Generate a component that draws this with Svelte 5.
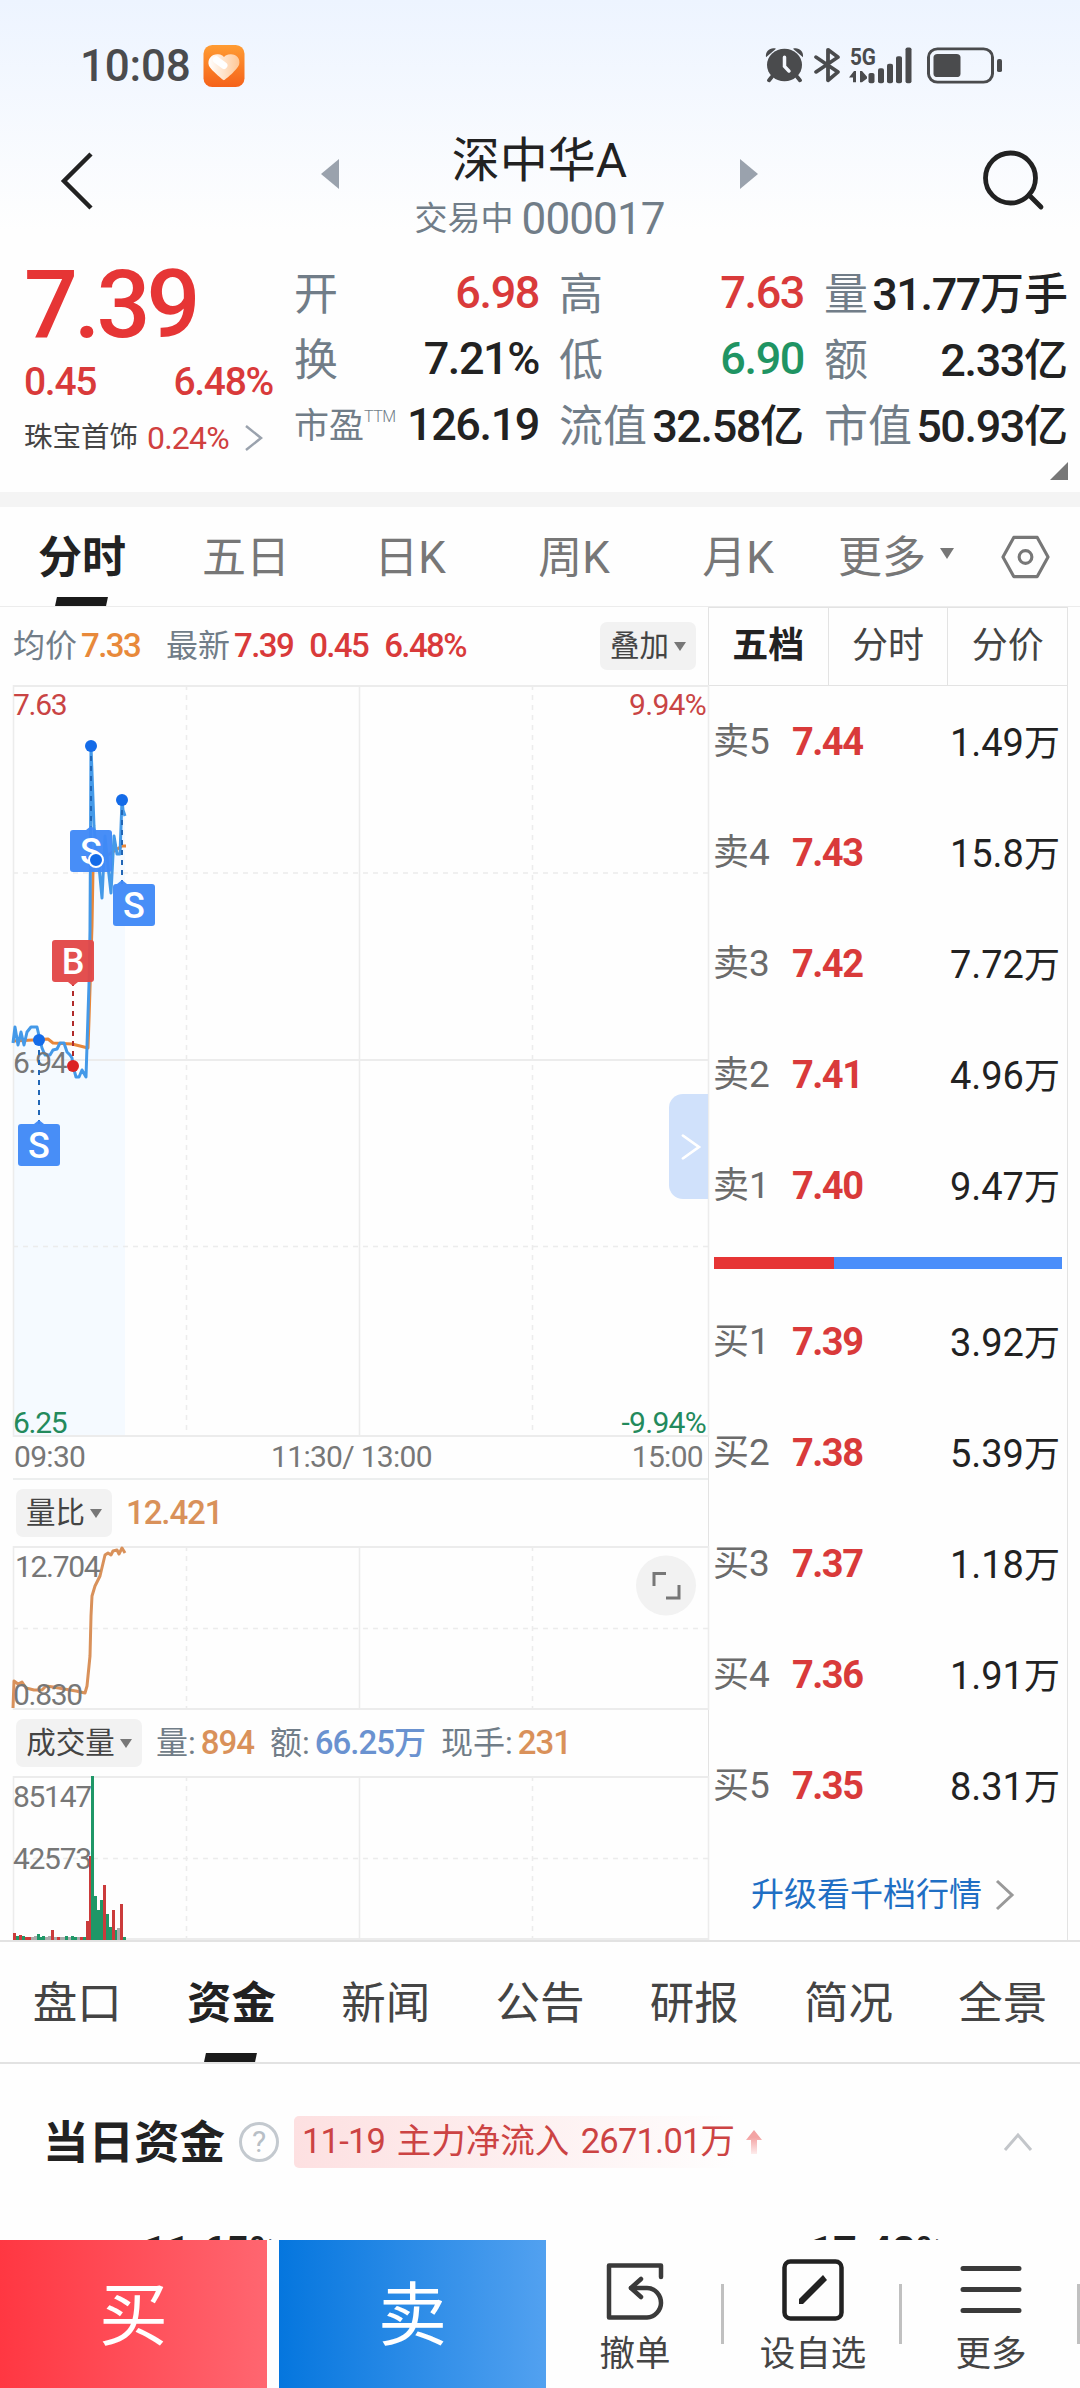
<script lang="ts">
  type Tone = 'up' | 'down' | '';

  interface Stat {
    label: string;
    value: string;
    unit?: string;
    tone?: Tone;
    sup?: string;
  }

  interface Level {
    name: string;
    no: number;
    price: string;
    volume: string;
  }

  interface Marker {
    kind: 'B' | 'S';
    x: number; // dot position
    y: number;
    boxX: number;
    boxY: number;
  }

  const stats: Stat[] = [
    { label: '开', value: '6.98', tone: 'up' },
    { label: '高', value: '7.63', tone: 'up' },
    { label: '量', value: '31.77', unit: '万手' },
    { label: '换', value: '7.21%' },
    { label: '低', value: '6.90', tone: 'down' },
    { label: '额', value: '2.33', unit: '亿' },
    { label: '市盈', value: '126.19', sup: 'TTM' },
    { label: '流值', value: '32.58', unit: '亿' },
    { label: '市值', value: '50.93', unit: '亿' }
  ];

  const periods = ['分时', '五日', '日K', '周K', '月K'];
  const bookTabs = ['五档', '分时', '分价'];
  const infoTabs = ['盘口', '资金', '新闻', '公告', '研报', '简况', '全景'];

  const asks: Level[] = [
    { name: '卖', no: 5, price: '7.44', volume: '1.49' },
    { name: '卖', no: 4, price: '7.43', volume: '15.8' },
    { name: '卖', no: 3, price: '7.42', volume: '7.72' },
    { name: '卖', no: 2, price: '7.41', volume: '4.96' },
    { name: '卖', no: 1, price: '7.40', volume: '9.47' }
  ];
  const bids: Level[] = [
    { name: '买', no: 1, price: '7.39', volume: '3.92' },
    { name: '买', no: 2, price: '7.38', volume: '5.39' },
    { name: '买', no: 3, price: '7.37', volume: '1.18' },
    { name: '买', no: 4, price: '7.36', volume: '1.91' },
    { name: '买', no: 5, price: '7.35', volume: '8.31' }
  ];

  let period = $state(0);
  let bookTab = $state(0);
  let infoTab = $state(1);

  // Price line, chart units
  const price =
    '0,358 2,342 5,360 8,347 11,360 14,347 18,342 24,342 27,355 29,363 32,370 37,370 40,365 44,364 47,358 51,358 54,367 57,370 59,373 60,381 63,392 66,392 69,385 73,392 76,299 77,245 78,61 81,141 84,175 86,181 89,213 92,151 95,181 98,208 101,151 104,169 107,169 109,115 110,125 112,131';
  const average = '0,356 20,355 35,354 40,358 59,359 75,363 76,335 79,241 80,185 83,179 95,170 109,161 113,161';
  const ratio =
    '0,162 1,135 5,138 9,136 13,142 21,144 29,144 33,140 40,141 51,143 63,145 72,147 74,140 77,110 78,70 79,50 82,40 87,30 92,9 95,7 98,9 100,5 104,4 106,8 109,2 112,7';

  const markers: Marker[] = [
    { kind: 'S', x: 78, y: 61, boxX: 57, boxY: 145 },
    { kind: 'S', x: 109, y: 115, boxX: 100, boxY: 199 },
    { kind: 'B', x: 60, y: 381, boxX: 39, boxY: 255 },
    { kind: 'S', x: 26, y: 355, boxX: 5, boxY: 439 }
  ];

  // x, height, colour
  const r = '#cb3b3b';
  const g = '#1f9767';
  const n = '#aaa';
  const bars: [number, number, string][] = [
    [0, 7, r], [3, 4, g], [6, 5, r], [9, 4, g], [12, 3, r], [15, 3, r], [18, 3, n], [21, 4, n],
    [24, 6, g], [27, 3, g], [29, 4, g], [32, 3, n], [35, 4, n], [38, 10, r], [41, 3, n], [44, 3, r],
    [47, 3, n], [50, 3, n], [52, 4, g], [55, 3, n], [58, 4, g], [61, 3, g], [64, 3, n], [67, 3, r],
    [70, 3, g], [73, 19, r], [76, 84, r], [78, 164, g], [81, 44, g], [84, 30, g], [87, 40, g],
    [90, 55, r], [93, 26, g], [96, 13, g], [99, 30, r], [102, 10, g], [104, 12, n], [107, 36, r], [110, 3, g]
  ];
</script>

{#snippet grid(h: number)}
  <g class="grid">
    <path d="M0.5 0V{h}M346.5 0V{h}M695.5 0V{h}" />
    <path class="dash" d="M173.5 0V{h}M519.5 0V{h}" />
    <path class="edge" d="M0 1H696M0 {h - 1}H696" />
  </g>
{/snippet}

{#snippet level(row: Level)}
  <div class="level">
    <span class="who">{row.name}<i>{row.no}</i></span>
    <b>{row.price}</b>
    <span class="vol">{row.volume}<em>万</em></span>
  </div>
{/snippet}

<div class="screen">
  <header class="top">
    <div class="status">
      <span class="clock">10:08</span>
      <svg class="app-icon" width="42" height="42" viewBox="0 0 42 43">
        <defs>
          <linearGradient id="orange" x1="0" y1="0" x2="0" y2="1">
            <stop offset="0" stop-color="#ff9c33" />
            <stop offset="1" stop-color="#f5621a" />
          </linearGradient>
          <linearGradient id="heart" x1="0" y1="0" x2="1" y2="0">
            <stop offset="0" stop-color="#fff" />
            <stop offset="1" stop-color="#ffc795" />
          </linearGradient>
        </defs>
        <rect width="42" height="43" rx="9" fill="url(#orange)" />
        <path
          d="M21 36C20 36 7 25 5.500 21C3.500 14 9 9 15 9.500C18 9.500 20 11 21 12.500C22 11 24 9.500 28 9.500C34 9.500 38 14 36.500 20C35 25 22 36 21 36Z"
          fill="url(#heart)"
        />
        <path d="M13 15L21 21" stroke="#fff" stroke-width="7" stroke-linecap="round" />
      </svg>
      <svg class="sys" width="240" height="39" viewBox="0 0 240 42" preserveAspectRatio="none">
        <g fill="#4a4b4d">
          <circle cx="19.500" cy="20.500" r="17.500" />
          <path d="M1 12C0 5 6 1 11 3zM38 12C39 5 33 1 28 3z" />
          <path d="M7 33L4 37M32 33L35 37" stroke="#4a4b4d" stroke-width="4" stroke-linecap="round" />
          <path d="M19.500 12V22L24 27" fill="none" stroke="#f5f8fe" stroke-width="3.500" stroke-linecap="round" />
          <path
            d="M51 12L73 28L63 37V4L73 12L51 28"
            fill="none"
            stroke="#4a4b4d"
            stroke-width="3.800"
            stroke-linejoin="round"
            stroke-linecap="round"
          />
          <text x="85" y="20" font-size="25" font-weight="700" textLength="26" lengthAdjust="spacingAndGlyphs">5G</text>
          <path d="M84 34L89 27H91V39H88V34zM95 27H97L102 33V35L97 39H95z" />
          <rect x="103.500" y="29" width="6" height="11" rx="2" />
          <rect x="113" y="24" width="6" height="16" rx="2" />
          <rect x="122" y="19" width="6" height="21" rx="2" />
          <rect x="131" y="11" width="6" height="29" rx="2" />
          <rect x="140.500" y="1.500" width="6" height="38.500" rx="2" />
          <rect x="163.500" y="3" width="64" height="36" rx="9" fill="none" stroke="#4a4b4d" stroke-width="3" />
          <rect x="168.500" y="8.500" width="27" height="25" rx="4" />
          <rect x="232" y="14" width="5" height="14" rx="2" />
        </g>
      </svg>
    </div>

    <nav class="nav">
      <svg class="back" width="34" height="60" viewBox="0 0 34 60">
        <path d="M30 3L3 30L30 57" fill="none" stroke="#222" stroke-width="4.500" />
      </svg>
      <div class="switch">
        <svg width="18" height="30" viewBox="0 0 18 30"><path d="M0 15L18 0V30z" fill="#9aa2ad" /></svg>
        <div class="title">
          <h1>深中华A</h1>
          <p>交易中 <span>000017</span></p>
        </div>
        <svg width="18" height="30" viewBox="0 0 18 30"><path d="M18 15L0 0V30z" fill="#9aa2ad" /></svg>
      </div>
      <svg class="search" width="62" height="62" viewBox="0 0 62 62">
        <g fill="none" stroke="#222" stroke-width="4.800">
          <circle cx="27.500" cy="29" r="25" />
          <path d="M46 46L58 58" stroke-linecap="round" />
        </g>
      </svg>
    </nav>

    <section class="quote">
      <div class="last">
        <strong>7.39</strong>
        <div class="change"><span>0.45</span><span>6.48%</span></div>
        <div class="sector">
          珠宝首饰 <span>0.24%</span>
          <svg width="20" height="28" viewBox="0 0 20 28">
            <path d="M2 2L17 14L2 26" fill="none" stroke="#9aa2ad" stroke-width="2.500" />
          </svg>
        </div>
      </div>
      <div class="stats">
        {#each stats as s}
          <div class="stat">
            <span class="label" class:small={s.sup}>{s.label}{#if s.sup}<sup>{s.sup}</sup>{/if}</span>
            <span class="value {s.tone ?? ''}" class:unit={s.unit}>{s.value}{#if s.unit}<em>{s.unit}</em>{/if}</span>
          </div>
        {/each}
      </div>
      <i class="corner"></i>
    </section>
  </header>

  <div class="band"></div>

  <nav class="periods">
    {#each periods as p, i}
      <button class:active={i === period} onclick={() => (period = i)}>{p}</button>
    {/each}
    <button class="more">更多<i class="caret"></i></button>
    <svg class="hex" width="49" height="46" viewBox="0 0 50 46">
      <g fill="none" stroke="#777" stroke-width="3.200" stroke-linejoin="round">
        <path d="M13 3H37L48 23L37 43H13L2 23z" />
        <circle cx="25" cy="23" r="6.500" />
      </g>
    </svg>
  </nav>

  <main class="market">
    <div class="charts">
      <div class="legend first">
        <span class="cap">均价</span><span class="num orange">7.33</span>
        <span class="cap gap">最新</span><span class="num red">7.39</span>
        <span class="num red next">0.45</span><span class="num red next">6.48%</span>
        <button class="pick push">叠加<i class="caret"></i></button>
      </div>

      <div class="plot">
        <svg width="696" height="752" viewBox="0 0 696 752">
          <polygon points="0,752 {price} 112,752" fill="#f5faff" />
          {@render grid(752)}
          <g class="grid">
            <path class="dash" d="M0 188H696M0 561.500H696" />
            <path class="edge" d="M0 375H696" />
          </g>
          <polyline points={average} class="line" stroke="#e8873a" />
          <polyline points={price} class="line" stroke="#4499e8" />
          <g class="axis">
            <text class="up" x="0" y="30">7.63</text>
            <text class="up end" x="693" y="30">9.94%</text>
            <text x="0" y="388">6.94</text>
            <text class="down" x="0" y="748">6.25</text>
            <text class="down end" x="693" y="748">-9.94%</text>
          </g>
          {#each markers as m}
            <g class={m.kind === 'B' ? 'mark buy' : 'mark sell'}>
              <path class="stem" d="M{m.x} {m.y + (m.kind === 'B' ? -10 : 10)}V{m.kind === 'B' ? m.boxY + 44 : m.boxY}" />
              {#if m.kind === 'B'}
                <path class="flag" d="M{m.x - 5} {m.boxY + 42}h10l-5 4z" />
              {:else}
                <path class="flag" d="M{m.x - 5} {m.boxY}h10l-5 -4z" />
              {/if}
              <rect class="flag" x={m.boxX} y={m.boxY} width="42" height="42" rx="3" />
              <text x={m.boxX + 21} y={m.boxY + 34}>{m.kind}</text>
              <circle cx={m.x} cy={m.y} r="6" />
            </g>
          {/each}
          <circle cx="83" cy="175" r="7" fill="#146be8" stroke="#fff" stroke-width="2" />
        </svg>
        <button class="drawer" aria-label="展开">
          <svg width="20" height="26" viewBox="0 0 20 32" preserveAspectRatio="none">
            <path d="M2 2L18 16L2 30" fill="none" stroke="#fff" stroke-width="3" stroke-linecap="round" />
          </svg>
        </button>
      </div>

      <div class="times"><span>09:30</span><span class="noon">11:30/ 13:00</span><span>15:00</span></div>

      <div class="legend ratio">
        <button class="pick">量比<i class="caret"></i></button>
        <span class="num tan lead">12.421</span>
      </div>
      <div class="plot">
        <svg width="696" height="164" viewBox="0 0 696 164">
          {@render grid(164)}
          <path class="dash grid" d="M0 82.500H696" />
          <polyline points={ratio} class="line" stroke="#d9915a" />
          <g class="axis">
            <text x="2" y="31">12.704</text>
            <text x="0" y="159">0.830</text>
          </g>
          <circle cx="653" cy="39.500" r="30" fill="#f2f2f2" />
          <path d="M641 40V27.500H653M666 39V52H653" fill="none" stroke="#777" stroke-width="3" />
        </svg>
      </div>

      <div class="legend volume">
        <button class="pick wide">成交量<i class="caret"></i></button>
        <span class="cap lead">量:</span><span class="num tan">894</span>
        <span class="cap next">额:</span><span class="num blue">66.25<em>万</em></span>
        <span class="cap next">现手:</span><span class="num tan">231</span>
      </div>
      <div class="plot">
        <svg width="696" height="164" viewBox="0 0 696 164">
          {@render grid(164)}
          <path class="dash grid" d="M0 82.500H696" />
          <g class="axis">
            <text x="0" y="31">85147</text>
            <text x="0" y="93">42573</text>
          </g>
          {#each bars as [x, h, color]}
            <rect {x} y={164 - h} width="3" height={h} fill={color} />
          {/each}
        </svg>
      </div>
    </div>

    <aside class="book">
      <div class="book-tabs">
        {#each bookTabs as t, i}
          <button class:active={i === bookTab} onclick={() => (bookTab = i)}>{t}</button>
        {/each}
      </div>
      <div class="levels">
        {#each asks as row}{@render level(row)}{/each}
      </div>
      <div class="balance"><i style="width: 34.5%"></i></div>
      <div class="levels">
        {#each bids as row}{@render level(row)}{/each}
      </div>
      <div class="upgrade">
        升级看千档行情
        <svg width="20" height="32" viewBox="0 0 20 32">
          <path d="M2 2L17 16L2 30" fill="none" stroke="#999" stroke-width="3" />
        </svg>
      </div>
    </aside>
  </main>

  <nav class="info-tabs">
    {#each infoTabs as t, i}
      <button class:active={i === infoTab} onclick={() => (infoTab = i)}>{t}</button>
    {/each}
  </nav>

  <section class="funds">
    <div class="funds-head">
      <h2>当日资金</h2>
      <span class="help">?</span>
      <span class="flow"><i>11-19</i> 主力净流入 <i>2671.01</i>万</span>
      <svg class="arrow" width="18" height="24" viewBox="0 0 18 24">
        <defs>
          <linearGradient id="fade" x1="0" y1="0" x2="0" y2="1">
            <stop offset="0.300" stop-color="#f3a3a3" />
            <stop offset="1" stop-color="#fdecec" />
          </linearGradient>
        </defs>
        <path d="M9 0L17 10H12V24H6V10H1z" fill="url(#fade)" />
      </svg>
      <svg class="fold" width="30" height="20" viewBox="0 0 30 20">
        <path d="M2 18L15 3L28 18" fill="none" stroke="#c3c6ca" stroke-width="3" />
      </svg>
    </div>
    <div class="shares"><span>11.65%</span><span>17.42%</span></div>
  </section>

  <footer class="actions">
    <button class="buy-btn">买</button>
    <button class="sell-btn">卖</button>
    <div class="tools">
      <div class="tool">
        <svg width="62" height="62" viewBox="0 0 62 62">
          <g fill="none" stroke="#3a3a3a" stroke-width="4.500" stroke-linecap="round" stroke-linejoin="round">
            <path d="M57 18V6.500H5V58.500H43C51 58 57 51 57 44C57 36 51 29 43 29H27" />
            <path d="M37 20L27 29L37 38" />
          </g>
        </svg>
        <span>撤单</span>
      </div>
      <div class="tool">
        <svg width="62" height="62" viewBox="0 0 62 62">
          <rect x="2.500" y="2.500" width="57" height="57" rx="6" fill="none" stroke="#222" stroke-width="4.500" />
          <path d="M17 45V40L41 16L45 21L21 45z" fill="#222" />
        </svg>
        <span>设自选</span>
      </div>
      <div class="tool">
        <svg width="62" height="62" viewBox="0 0 62 62">
          <path d="M3 9.500H59M3 30.500H59M3 51.500H59" stroke="#3a3a3a" stroke-width="5" stroke-linecap="round" />
        </svg>
        <span>更多</span>
      </div>
    </div>
  </footer>
</div>

<style>
  :global(body) {
    margin: 0;
    background: #fff;
  }

  .screen {
    display: flex;
    flex-direction: column;
    width: 1080px;
    height: 2388px;
    overflow: hidden;
    background: #fefefe;
    color: #222;
    font-family: Roboto, "Noto Sans CJK SC", sans-serif;
  }

  button {
    padding: 0;
    border: none;
    background: none;
    color: inherit;
    font-family: inherit;
  }

  h1, h2, p {
    margin: 0;
    font-weight: 400;
  }

  i, em {
    font-style: normal;
  }

  svg {
    display: block;
    flex: none;
    overflow: visible;
  }

  .up { color: #d93a3a; fill: #c94444; }
  .down { color: #1f9463; fill: #238a5c; }

  .top {
    height: 492px;
    flex: none;
    background: linear-gradient(#edf4ff, #fefefe 230px);
  }

  .status {
    display: flex;
    align-items: center;
    box-sizing: border-box;
    height: 131px;
    padding: 0 75px 0 80px;
  }

  .clock {
    width: 123px;
    color: #4a4b4d;
    font-size: 44px;
    font-weight: 500;
    letter-spacing: -0.2px;
  }

  .sys {
    margin-left: auto;
  }

  .nav {
    display: flex;
    justify-content: space-between;
    height: 119px;
    padding: 0 35px 0 61px;
  }

  .back {
    margin-top: 20px;
  }

  .search {
    margin-top: 18px;
  }

  .switch {
    display: flex;
    justify-content: space-between;
    width: 438px;
    margin-left: 1px;
  }

  .switch > svg {
    margin-top: 28px;
  }

  .title {
    text-align: center;
    white-space: nowrap;
  }

  .title h1 {
    font-size: 48px;
    line-height: 60px;
  }

  .title p {
    color: #717d88;
    font-size: 33px;
    line-height: 56px;
  }

  .title p span {
    font-size: 44px;
    letter-spacing: -0.9px;
    vertical-align: -4px;
  }

  .quote {
    position: relative;
    display: flex;
    height: 242px;
  }

  .last {
    display: flex;
    flex-direction: column;
    width: 271px;
    padding: 3px 0 0 24px;
  }

  .last strong {
    height: 104px;
    color: #e63535;
    font-size: 95px;
    font-weight: 500;
    letter-spacing: -4px;
    line-height: 104px;
  }

  .change {
    display: flex;
    justify-content: space-between;
    height: 50px;
    padding-right: 22px;
    color: #d93a3a;
    font-size: 39px;
    font-weight: 500;
    letter-spacing: -1.3px;
    line-height: 50px;
  }

  .sector {
    display: flex;
    align-items: center;
    height: 62px;
    color: #444;
    font-size: 28.5px;
    line-height: 40px;
    white-space: nowrap;
  }

  .sector span {
    margin: 0 15px 0 9px;
    color: #d0403f;
    font-size: 32px;
    letter-spacing: -0.8px;
  }

  .stats {
    display: grid;
    grid-template-columns: 245px 245px 244px;
    grid-auto-rows: 66px;
    column-gap: 20px;
    padding-top: 10px;
    margin-left: -1px;
  }

  .stat {
    display: flex;
    align-items: center;
    justify-content: space-between;
    white-space: nowrap;
  }

  .label {
    padding-top: 3px;
    color: #717d88;
    font-size: 44px;
    line-height: 60px;
  }

  .label.small {
    font-size: 35px;
  }

  .label sup {
    font-size: 16px;
    font-weight: 300;
    line-height: 1;
    vertical-align: 16px;
    letter-spacing: -0.5px;
  }

  .value {
    font-size: 45px;
    font-weight: 500;
    letter-spacing: -1.4px;
    line-height: 60px;
  }

  .value.unit {
    padding-top: 4px;
  }

  .value em {
    font-size: 44px;
    letter-spacing: 0;
  }

  .corner {
    position: absolute;
    right: 12px;
    bottom: 12px;
    border-bottom: 18px solid #777;
    border-left: 18px solid transparent;
  }

  .band {
    flex: none;
    height: 15px;
    background: #f4f4f4;
  }

  .periods {
    display: flex;
    align-items: center;
    flex: none;
    box-sizing: border-box;
    height: 100px;
    border-bottom: 1px solid #ececec;
  }

  .periods button {
    position: relative;
    width: 164px;
    height: 99px;
    padding-bottom: 6px;
    color: #777;
    font-size: 44px;
  }

  .periods .more {
    display: flex;
    align-items: center;
    box-sizing: border-box;
    width: 181px;
    padding-left: 18px;
  }

  .active,
  .periods button.active {
    color: #222;
    font-weight: 700;
  }

  .periods .active::after,
  .info-tabs .active::after {
    content: "";
    position: absolute;
    bottom: 0;
    left: calc(50% - 26px);
    width: 51px;
    height: 9px;
    background: #1a1a1a;
    transform: skewX(-12deg);
  }

  .caret {
    border: 6.5px solid transparent;
    border-top: 9px solid #777;
    border-bottom: 0;
  }

  .more .caret {
    margin-left: 14px;
    border-width: 11px 7.5px 0;
  }

  .market {
    display: flex;
    flex: none;
    height: 1333px;
    border-bottom: 2px solid #e2e2e2;
  }

  .charts {
    display: flex;
    flex-direction: column;
    width: 695px;
    padding-left: 13px;
  }

  .legend {
    display: flex;
    align-items: center;
    line-height: 40px;
    white-space: nowrap;
  }

  .legend.first {
    height: 78px;
  }

  .legend.ratio {
    height: 66px;
    border-top: 2px solid #eceeee;
  }

  .legend.volume {
    height: 66px;
  }

  .cap {
    color: #717d88;
    font-size: 32px;
  }

  .num {
    margin-left: 4px;
    font-size: 33px;
    font-weight: 500;
    letter-spacing: -1.6px;
  }

  .volume .num {
    margin-left: 5px;
    letter-spacing: -1px;
  }

  .num em {
    font-size: 32px;
  }

  .gap { margin-left: 26px; }
  .num.next, .next { margin-left: 16px; }
  .num.lead, .lead { margin-left: 14px; }
  .ratio .num { letter-spacing: -1.1px; }
  .push { margin-left: auto; margin-right: 12px; }

  .orange { color: #e8893a; }
  .red { color: #d93a3a; }
  .tan { color: #d9915a; }
  .blue { color: #6a92d0; }

  .pick {
    display: flex;
    align-items: center;
    justify-content: center;
    gap: 5px;
    width: 96px;
    height: 48px;
    border-radius: 7px;
    background: #f2f2f2;
    color: #444;
    font-size: 29.5px;
    line-height: 40px;
  }

  .ratio .pick,
  .volume .pick {
    margin-left: 3px;
  }

  .pick.wide {
    width: 126px;
  }

  .plot {
    position: relative;
  }

  .grid {
    fill: none;
    stroke: #ececec;
    stroke-width: 1.5;
  }

  .edge {
    stroke-width: 2;
  }

  .dash {
    stroke-dasharray: 5 5;
  }

  .line {
    fill: none;
    stroke-width: 3;
    stroke-linejoin: round;
  }

  .axis text {
    font-size: 30px;
    letter-spacing: -1.3px;
  }

  .axis text:not(.up):not(.down) {
    fill: #777;
  }

  .axis .end {
    letter-spacing: -0.7px;
    text-anchor: end;
  }

  .mark text {
    fill: #fff;
    font-size: 36px;
    font-weight: 500;
    text-anchor: middle;
  }

  .stem {
    stroke-width: 2;
    stroke-dasharray: 5 5;
  }

  .flag {
    fill-opacity: 0.96;
  }

  .sell .flag { fill: #4189f7; }
  .sell circle { fill: #146be8; }
  .sell .stem { stroke: #2266b5; }
  .buy .flag { fill: #e24848; }
  .buy circle { fill: #dc2424; }
  .buy .stem { stroke: #b02a2a; }

  .drawer {
    position: absolute;
    top: 409px;
    right: 0;
    display: flex;
    align-items: center;
    justify-content: center;
    width: 39px;
    height: 105px;
    padding-left: 4px;
    border-radius: 14px 0 0 14px;
    background: #d0e1fb;
    box-sizing: border-box;
  }

  .times {
    display: flex;
    justify-content: space-between;
    height: 41px;
    padding: 0 5px 0 1px;
    color: #777;
    font-size: 30px;
    letter-spacing: -0.7px;
    line-height: 39px;
  }

  .noon {
    margin-right: 14px;
  }

  .book {
    display: flex;
    flex-direction: column;
    box-sizing: border-box;
    width: 360px;
    height: 1333px;
    border: 1px solid #e3e3e3;
    border-bottom: none;
  }

  .book-tabs {
    display: flex;
    height: 77px;
    border-bottom: 1px solid #e3e3e3;
  }

  .book-tabs button {
    flex: 1;
    padding-bottom: 2px;
    color: #444;
    font-size: 36px;
    line-height: 50px;
  }

  .book-tabs button + button {
    border-left: 1px solid #e3e3e3;
  }

  .book-tabs button.active {
    color: #222;
  }

  .level {
    display: flex;
    align-items: center;
    height: 111px;
    padding: 0 7px 0 4px;
    font-size: 38px;
    line-height: 50px;
  }

  .who {
    width: 79px;
    color: #6b6b6b;
    font-size: 36px;
  }

  .who i {
    font-size: 37px;
  }

  .level b {
    letter-spacing: -1.5px;
    color: #d93a3a;
  }

  .vol {
    margin: 3px 0 0 auto;
  }

  .vol em {
    font-size: 36px;
  }

  .balance {
    height: 12px;
    margin: 16px 5px 17px;
    background: #4a8efa;
  }

  .balance i {
    display: block;
    height: 100%;
    background: #e63535;
  }

  .upgrade {
    display: flex;
    align-items: center;
    justify-content: center;
    gap: 13px;
    box-sizing: border-box;
    height: 99px;
    padding: 8px 10px 0 0;
    color: #1f6fc4;
    font-size: 33px;
    line-height: 50px;
  }

  .info-tabs {
    display: flex;
    flex: none;
    height: 120px;
    border-bottom: 2px solid #e2e2e2;
  }

  .info-tabs button {
    position: relative;
    flex: 1;
    padding-bottom: 6px;
    color: #444;
    font-size: 44.5px;
  }

  .info-tabs button.active {
    color: #222;
  }

  .funds {
    flex: 1;
    overflow: hidden;
  }

  .funds-head {
    display: flex;
    align-items: center;
    height: 156px;
    padding: 0 47px 0 43px;
  }

  .funds h2 {
    padding-bottom: 6px;
    font-size: 45.5px;
    font-weight: 700;
  }

  .help {
    box-sizing: border-box;
    width: 40px;
    height: 40px;
    margin: 0 15px 0 14px;
    border: 3px solid #c3c9cf;
    border-radius: 50%;
    color: #b8bfc6;
    font-size: 30px;
    line-height: 34px;
    text-align: center;
  }

  .flow {
    padding: 0 2px 2px 8px;
    border-radius: 5px;
    background: linear-gradient(90deg, #fde0e1, #fefefe);
    color: #cc4343;
    font-size: 34.5px;
    line-height: 50px;
    word-spacing: 3px;
    white-space: nowrap;
  }

  .flow i {
    letter-spacing: -0.8px;
  }

  .arrow {
    margin-left: 8px;
  }

  .fold {
    margin-left: auto;
  }

  .shares {
    display: flex;
    justify-content: space-between;
    padding: 6px 134px 0 143px;
    font-size: 41px;
    font-weight: 700;
    line-height: 50px;
  }

  .actions {
    display: flex;
    flex: none;
    height: 148px;
    background: #fefefe;
  }

  .buy-btn, .sell-btn {
    width: 267px;
    padding-bottom: 8px;
    color: #fff;
    font-size: 69px;
  }

  .buy-btn {
    margin-right: 12px;
    background: linear-gradient(90deg, #ff3742, #ff6670);
  }

  .sell-btn {
    background: linear-gradient(90deg, #0576de, #52a1f0);
  }

  .tools {
    display: flex;
    flex: 1;
  }

  .tool {
    position: relative;
    display: flex;
    flex: 1;
    flex-direction: column;
    align-items: center;
    padding-top: 19px;
    color: #444;
    font-size: 35.5px;
    line-height: 66px;
  }

  /* Divider between tools */
  .tool::after {
    content: "";
    position: absolute;
    top: 44px;
    right: 0;
    width: 3px;
    height: 60px;
    background: #c0c0c0;
  }
</style>
